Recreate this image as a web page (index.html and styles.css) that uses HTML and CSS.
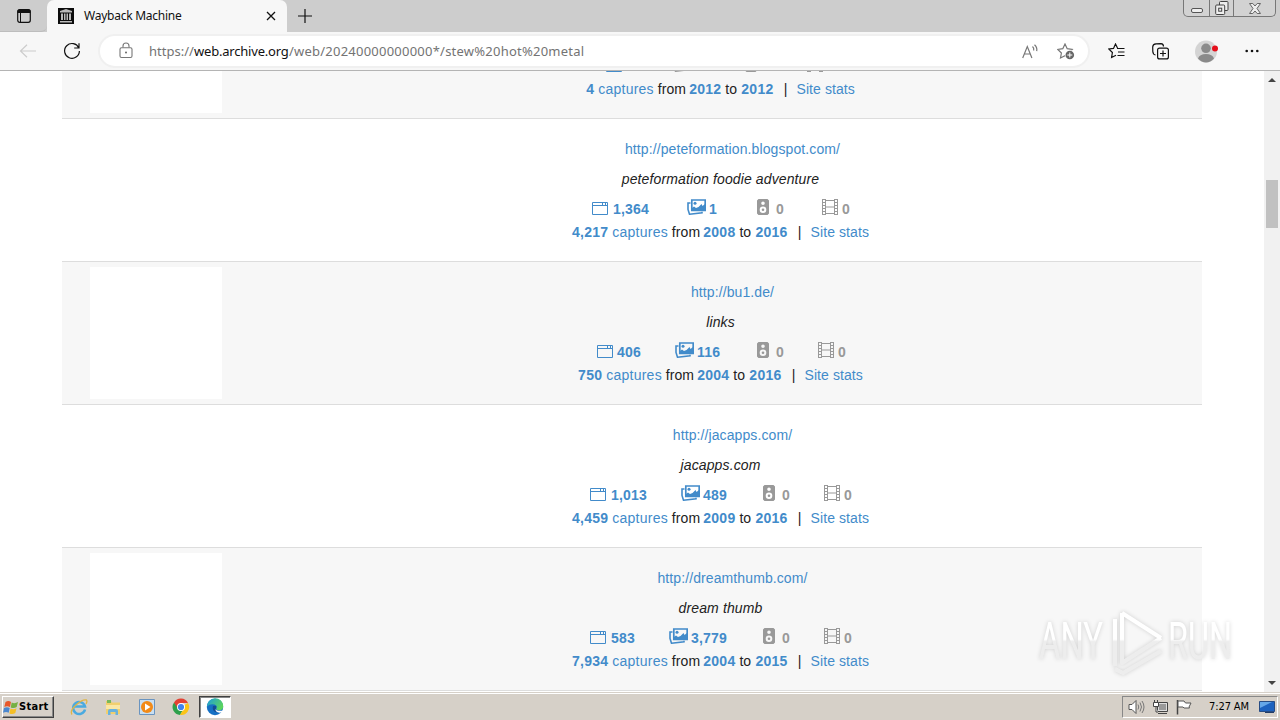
FILE: index.html
```html
<!DOCTYPE html>
<html lang="en">
<head>
<meta charset="utf-8">
<title>Wayback Machine</title>
<link rel="stylesheet" href="styles.css">
</head>
<body>
<svg class="defs" aria-hidden="true">
  <symbol id="web" viewBox="0 0 16 13"><path d="M.5.5h15v12H.5zM0 3.5h16M10.500 1v2M13.500 1v2" fill="none" stroke="currentColor"/></symbol>
  <symbol id="img" viewBox="0 0 19 16"><path d="M3.500 4H1v6.500l1.500 4.700 12.500-1.500v-1" fill="none" stroke="currentColor" stroke-width="1.600"/><path d="M4.800 1h13.400v10.500H4.800z" fill="none" stroke="currentColor" stroke-width="1.700"/><path d="M5 9l2-1.500 2 1.500 2.500-1 3-3 1 2L18 5v6.500H5z" fill="currentColor"/><circle cx="8" cy="4.300" r="1.500" fill="currentColor"/></symbol>
  <symbol id="aud" viewBox="0 0 12 16"><path fill="currentColor" fill-rule="evenodd" d="M1.500 0h9L12 1.500v13L10.500 16h-9L0 14.500v-13zM6 2.500a1.800 1.800 0 1 0 0 3.600 1.800 1.800 0 0 0 0-3.600zM6 7.500a3.300 3.300 0 1 0 0 6.600 3.300 3.300 0 0 0 0-6.600z"/><circle cx="6" cy="10.800" r="1.300" fill="currentColor"/></symbol>
  <symbol id="film" viewBox="0 0 16 16"><path d="M.5 0v16M15.500 0v16M3.500 0v16M12.500 0v16M3 1.500h10M3 8h10M3 14.500h10M0 .5h4M0 3.500h4M0 6.500h4M0 9.500h4M0 12.500h4M0 15.500h4M12 .5h4M12 3.500h4M12 6.500h4M12 9.500h4M12 12.500h4M12 15.500h4" fill="none" stroke="currentColor"/></symbol>
</svg>

<header class="browser">
  <div class="tabstrip">
    <div class="tabmenu"><svg width="16" height="16" viewBox="0 0 16 16"><rect x="1.700" y="1.700" width="12.600" height="12.600" rx="2" fill="none" stroke="#111" stroke-width="1.200"/><path d="M1.500 5V3q0-1.500 1.500-1.500h10q1.500 0 1.500 1.500v2z" fill="#111"/><path d="M4.500 5v9" stroke="#111"/></svg></div>
    <div class="tab">
      <svg width="16" height="16" viewBox="0 0 16 16"><path fill="#0c0c0c" d="M0 0h16v16H0z"/><path fill="#bbb" d="M8 1l6 2v1.500H2V3zM2 13h12v1.500H2zM3 5.500h2V12H3zM6 5.500h1.500V12H6zM8.500 5.500H10V12H8.500zM11 5.500h2V12h-2z"/></svg>
      <span class="tabtitle">Wayback Machine</span>
      <svg width="10" height="10" viewBox="0 0 10 10"><path d="M1 1l8 8M9 1L1 9" stroke="#111" stroke-width="1.300"/></svg>
    </div>
    <svg class="plus" width="14" height="14" viewBox="0 0 14 14"><path d="M7 0v14M0 7h14" stroke="#111" stroke-width="1.200"/></svg>
    <div class="winbtns">
      <span class="wb1"><svg width="12" height="5" viewBox="0 0 12 5"><rect x=".5" y=".5" width="11" height="4" rx="1.500" fill="#eee" stroke="#555"/></svg></span>
      <span class="wb2"><svg width="14" height="14" viewBox="0 0 14 14"><g fill="#eee" stroke="#444"><rect x="4.500" y=".5" width="8.500" height="9" rx="1"/><rect x=".7" y="4" width="9" height="9.500" rx="1"/><rect x="3.700" y="7.200" width="3" height="3" /></g></svg></span>
      <span class="wb3"><svg width="12" height="11" viewBox="0 0 12 11"><path d="M.5.5h3.300L6 3 8.200.5h3.300L8 5.500l3.500 5H8.200L6 8l-2.200 2.500H.5L4 5.500z" fill="#eee" stroke="#666"/></svg></span>
    </div>
  </div>
  <div class="toolbar">
    <svg class="back" width="18" height="14" viewBox="0 0 18 14"><path d="M17 7H1.500M8 .8L1.500 7 8 13.200" fill="none" stroke="#ccc" stroke-width="1.200"/></svg>
    <svg class="reload" width="18" height="18" viewBox="0 0 18 18"><path d="M15.800 6A7.400 7.400 0 1 0 16.400 9M16 1.200V6h-4.800" fill="none" stroke="#111" stroke-width="1.200"/></svg>
    <div class="omnibox">
      <svg class="lock" width="14" height="17" viewBox="0 0 14 17"><rect x="1" y="5.700" width="12" height="9.800" rx="1.500" fill="none" stroke="#777" stroke-width="1.100"/><path d="M4 5.500V4q0-3 3-3t3 3v1.500" fill="none" stroke="#777" stroke-width="1.100"/><circle cx="7" cy="10.600" r="1" fill="#666"/></svg>
      <span class="url"><span class="u1">https://</span><b class="u2">web.archive.org</b><span class="u3">/web/20240000000000*/stew%20hot%20metal</span></span>
      <svg class="read" width="17" height="15" viewBox="0 0 17 15"><path d="M.7 14L5.300 2.500 9.900 14M2.300 10h6M10.500 2.500q1.700 1.500 1.200 4M12.500.7q3 2.800 2.200 6.500" fill="none" stroke="#777" stroke-width="1.200"/></svg>
      <svg class="fav" width="18" height="17" viewBox="0 0 18 17"><path d="M8 1l2.200 4.700 5 .7-3.700 3.600.9 5L8 12.700 3.500 15l.9-5L.8 6.400l5-.7z" fill="none" stroke="#777" stroke-width="1.200"/><circle cx="12.800" cy="12" r="5" fill="#fff"/><circle cx="12.800" cy="12" r="4.300" fill="#666"/><path d="M10.300 12h5M12.800 9.500v5" stroke="#fff"/></svg>
    </div>
    <svg class="favs" width="17" height="16" viewBox="0 0 17 16"><path d="M9.500 5L7.500 1 5.500 5.400.8 6l3.600 3.500-.8 5L8 12.300M9 5.500h7.500M10 9h6.500M9.500 12.500h7" fill="none" stroke="#111" stroke-width="1.200"/></svg>
    <svg class="coll" width="17" height="17" viewBox="0 0 17 17"><path d="M3.500 12Q1 11.500.8 8.500L.7 4Q.8 1 4 .8l5-.2q2.500.2 2.500 3" fill="none" stroke="#111" stroke-width="1.200"/><rect x="5.600" y="5.100" width="10.800" height="10.800" rx="2" fill="#f7f7f7" stroke="#111" stroke-width="1.200"/><path d="M11 7.500v6M8 10.500h6" stroke="#111" stroke-width="1.200"/></svg>
    <svg class="prof" width="24" height="23" viewBox="0 0 24 23"><circle cx="11" cy="11.500" r="11" fill="#d4d4d4"/><circle cx="11" cy="8.300" r="4.800" fill="#8a8a8a"/><path d="M3 18.500q1.500-4.500 8-4.500t8 4.500Q15.500 22.400 11 22.400T3 18.500z" fill="#8a8a8a"/><circle cx="20" cy="8.500" r="3" fill="#e5101c"/></svg>
    <svg class="dots" width="14" height="4" viewBox="0 0 14 4"><g fill="#111"><circle cx="1.700" cy="2" r="1.300"/><circle cx="7" cy="2" r="1.300"/><circle cx="12.300" cy="2" r="1.300"/></g></svg>
  </div>
</header>

<div class="viewport">
  <main class="results">
    <article class="row odd first">
      <div class="thumb"></div>
      <div class="info">
        <a class="link">&nbsp;</a>
        <em class="title">&nbsp;</em>
        <div class="stats s0"><span class="st web on"><svg><use href="#web"/></svg></span><span class="st img"><svg><use href="#img"/></svg></span><span class="st aud"><svg><use href="#aud"/></svg></span><span class="st film"><svg><use href="#film"/></svg></span></div>
        <div class="caps"><b>4</b><a class="c">captures</a><span class="f">from</span><b>2012</b><span class="t">to</span><b>2012</b><span class="bar">|</span><a class="ss">Site stats</a></div>
      </div>
    </article>
    <article class="row">
      <div class="thumb"></div>
      <div class="info">
        <a class="link">http://peteformation.blogspot.com/</a>
        <em class="title">peteformation foodie adventure</em>
        <div class="stats s1"><span class="st web on"><svg><use href="#web"/></svg><b>1,364</b></span><span class="st img on"><svg><use href="#img"/></svg><b>1</b></span><span class="st aud"><svg><use href="#aud"/></svg><b>0</b></span><span class="st film"><svg><use href="#film"/></svg><b>0</b></span></div>
        <div class="caps"><b>4,217</b><a class="c">captures</a><span class="f">from</span><b>2008</b><span class="t">to</span><b>2016</b><span class="bar">|</span><a class="ss">Site stats</a></div>
      </div>
    </article>
    <article class="row odd">
      <div class="thumb"></div>
      <div class="info">
        <a class="link">http://bu1.de/</a>
        <em class="title">links</em>
        <div class="stats s2"><span class="st web on"><svg><use href="#web"/></svg><b>406</b></span><span class="st img on"><svg><use href="#img"/></svg><b>116</b></span><span class="st aud"><svg><use href="#aud"/></svg><b>0</b></span><span class="st film"><svg><use href="#film"/></svg><b>0</b></span></div>
        <div class="caps"><b>750</b><a class="c">captures</a><span class="f">from</span><b>2004</b><span class="t">to</span><b>2016</b><span class="bar">|</span><a class="ss">Site stats</a></div>
      </div>
    </article>
    <article class="row">
      <div class="thumb"></div>
      <div class="info">
        <a class="link">http://jacapps.com/</a>
        <em class="title">jacapps.com</em>
        <div class="stats s3"><span class="st web on"><svg><use href="#web"/></svg><b>1,013</b></span><span class="st img on"><svg><use href="#img"/></svg><b>489</b></span><span class="st aud"><svg><use href="#aud"/></svg><b>0</b></span><span class="st film"><svg><use href="#film"/></svg><b>0</b></span></div>
        <div class="caps"><b>4,459</b><a class="c">captures</a><span class="f">from</span><b>2009</b><span class="t">to</span><b>2016</b><span class="bar">|</span><a class="ss">Site stats</a></div>
      </div>
    </article>
    <article class="row odd">
      <div class="thumb"></div>
      <div class="info">
        <a class="link">http://dreamthumb.com/</a>
        <em class="title">dream thumb</em>
        <div class="stats s4"><span class="st web on"><svg><use href="#web"/></svg><b>583</b></span><span class="st img on"><svg><use href="#img"/></svg><b>3,779</b></span><span class="st aud"><svg><use href="#aud"/></svg><b>0</b></span><span class="st film"><svg><use href="#film"/></svg><b>0</b></span></div>
        <div class="caps"><b>7,934</b><a class="c">captures</a><span class="f">from</span><b>2004</b><span class="t">to</span><b>2015</b><span class="bar">|</span><a class="ss">Site stats</a></div>
      </div>
    </article>
  </main>
  <div class="scroll">
    <svg width="8" height="4" viewBox="0 0 8 4"><path d="M0 4l4-4 4 4z" fill="#444"/></svg>
    <div class="handle"></div>
    <svg width="8" height="4" viewBox="0 0 8 4"><path d="M0 0l4 4 4-4z" fill="#444"/></svg>
  </div>
</div>

<footer class="taskbar">
  <div class="start"><svg width="16" height="15" viewBox="0 0 16 15"><path d="M2.500 2q3-2 5.500 0L7 7Q4 5.500 1.300 7z" fill="#e8582a"/><path d="M8.700 2.500q3 1.500 6.300-.5L13.700 7q-3 2-6 .4z" fill="#76b043"/><path d="M1 8q3-1.500 5.700 0l-1 4.700Q3 11.300 0 12.800z" fill="#4a87cf"/><path d="M7.500 8.500q3 1.500 6-.2l-1.200 4.800q-3 1.800-5.900.3z" fill="#f5bf26"/></svg><b>Start</b></div>
  <div class="apps">
    <svg width="18" height="18" viewBox="0 0 18 18"><path d="M15 11.500A6 6 0 1 1 15 8.600H4.500" fill="none" stroke="#4aaae0" stroke-width="2.500"/><path d="M2 16.500Q-.5 13 6 7T16.500 2q1 1.500-.5 4" fill="none" stroke="#e0b545" stroke-width="1.300"/></svg>
    <svg width="18" height="18" viewBox="0 0 18 18"><path d="M2 3h5l1 1.500h8V16H2z" fill="#f1cf6e"/><path d="M3 2h4v3H3z" fill="#78b85a"/><path d="M2 7h14v4H2z" fill="#fae7a5"/><path d="M4 17v-4q0-2 2-2h6q2 0 2 2v4h-2.500v-3h-5v3z" fill="#69b2dd"/></svg>
    <svg width="18" height="18" viewBox="0 0 18 18"><path d="M1.500 1.500h15v15h-15z" fill="#c9dff2" stroke="#6a94c0"/><circle cx="9" cy="9" r="6" fill="#f28a18"/><path d="M7 5.500v7L12.500 9z" fill="#fff"/></svg>
    <svg width="18" height="18" viewBox="0 0 18 18"><path d="M9 9L2 4.500A8 8 0 0 0 8 17l3.500-6z" fill="#2da04b"/><path d="M9 9l7-4a8 8 0 0 1-8 12l3.500-6z" fill="#fbc417"/><path d="M9 5h7a8 8 0 0 0-14-.5L5.500 10z" fill="#e34133"/><circle cx="9" cy="9" r="4" fill="#fff"/><circle cx="9" cy="9" r="3.100" fill="#4083ee"/></svg>
    <div class="active"><svg width="18" height="18" viewBox="0 0 18 18"><defs><linearGradient id="eg" x1="0" y1="0" x2="1" y2=".5"><stop offset="0" stop-color="#1a9be0"/><stop offset="1" stop-color="#5bd45e"/></linearGradient></defs><circle cx="9" cy="9" r="8.200" fill="#1670c4"/><path d="M1 8.500A8 8 0 0 1 17.200 8q.3 4-4 4.300-3.500 0-2.700-2 1-2.800-2-3.800Q4 5.500 1 8.500z" fill="url(#eg)"/><path d="M7 8q-1.500 5 3.500 6.300 3 .5 5.500-1-2.500 1-4.500-.3Q9 12 10.200 9.500T7 8z" fill="#124c94"/><path d="M10.300 9.500q-1.300 2.800 2 3.300H18l-1.500 1.400q-6 1.500-7-2z" fill="#fff"/></svg></div>
  </div>
  <div class="tray">
    <svg width="17" height="16" viewBox="0 0 17 16"><path d="M1 5.500h3l4-4v13l-4-4H1z" fill="#fff" stroke="#555"/><path d="M10 5.500q1.500 2.500 0 5M12 3.500q3 4.500 0 9M14 2q4 6 0 12" fill="none" stroke="#777"/></svg>
    <svg width="17" height="16" viewBox="0 0 17 16"><path d="M5.500 3.500h10v9h-10zM6 14.500h9" fill="#ddd" stroke="#444"/><path d="M7 5h7v6H7z" fill="#999"/><path d="M1.500 3.500h5v4h-5zM2.500 1v2M5.500 1v2M4 8v5h2" fill="#fff" stroke="#444"/></svg>
    <svg width="16" height="16" viewBox="0 0 16 16"><path d="M1.500 1v14.500" stroke="#444" stroke-width="1.500"/><path d="M2 2h6l1.500 2H15l-2 4 .5 1H8L7 8H2z" fill="#fff" stroke="#555"/></svg>
    <time>7:27 AM</time>
    <svg width="16" height="14" viewBox="0 0 16 14"><path d="M.5 1.500h15v10H.5z" fill="#1d62bf" stroke="#274c84"/><path d="M1 2h12L1 8z" fill="#65a7e8"/><path d="M6 12h9v1H6z" fill="#223c66"/></svg>
  </div>
</footer>

<svg class="mark" width="250" height="80" viewBox="0 0 250 80">
  <defs><linearGradient id="wm" x1="0" y1="0" x2="0" y2="80" gradientUnits="userSpaceOnUse"><stop offset=".44" stop-color="#fff"/><stop offset=".47" stop-color="#ededed"/></linearGradient></defs>
  <g fill="url(#wm)">
    <text x="9" y="55" textLength="64" lengthAdjust="spacingAndGlyphs">ANY</text>
    <text x="138" y="55" textLength="64" lengthAdjust="spacingAndGlyphs">RUN</text>
  </g>
  <path d="M92 9l39 25M92 9v50l39-25M85 62V15M85 65l8 4 38-22" fill="none" stroke="url(#wm)" stroke-width="4" stroke-linejoin="round"/>
</svg>
</body>
</html>
```
FILE: styles.css
```css
* { box-sizing: border-box; }
html, body { margin: 0; height: 100%; }
body { width: 1280px; height: 720px; overflow: hidden; display: flex; flex-direction: column; background: #fff; font: 14px/20px "Liberation Sans", Arial, sans-serif; color: #222; position: relative; }
svg { display: block; flex: none; }
.defs { position: absolute; width: 0; height: 0; }

.browser { flex: none; height: 71px; background: #f7f7f7; border-bottom: 1px solid #b4b4b4; font-family: "Noto Sans", "Open Sans", sans-serif; }
.tabstrip { height: 32px; background: #cdcdcd; display: flex; align-items: flex-start; }
.tabmenu { width: 47px; height: 32px; padding: 8px 0 0 16px; border-bottom: 1px solid #bdbdbd; border-radius: 0 0 6px 0; }
.tab { width: 240px; height: 32px; background: #f7f7f7; border-radius: 7px 7px 0 0; display: flex; align-items: center; padding: 0 11px; }
.tabtitle { flex: 1; margin-left: 10px; font-size: 12px; color: #111; letter-spacing: -.25px; }
.plus { margin: 9px 0 0 11px; }
.winbtns { margin: 0 4px 0 auto; width: 93px; height: 17px; display: flex; border: 1px solid #777; border-top: 0; border-radius: 0 0 5px 5px; background: #d2d2d2; }
.winbtns span { display: flex; justify-content: center; align-items: center; }
.wb1 { width: 25px; padding-top: 4px; }
.wb2 { width: 25px; border: solid #777; border-width: 0 1px; }
.wb3 { flex: 1; }

.toolbar { height: 38px; display: flex; align-items: center; padding-left: 19px; }
.reload { margin-left: 26px; }
.omnibox { width: 988px; height: 30px; margin-left: 19px; border-radius: 15px; background: #fff; box-shadow: 0 0 0 2px #f0f0f0; display: flex; align-items: center; padding: 0 13px 0 19px; }
.lock { margin-top: -2px; }
.url { margin-left: 16px; flex: 1; color: #737373; font-size: 13px; white-space: nowrap; display: flex; }
.url b { font-weight: 400; color: #111; }
.u1 { width: 45px; }
.u2 { width: 95px; letter-spacing: -.2px; }
.u3 { letter-spacing: .23px; }
.fav { margin-left: 18px; }
.favs { margin-left: 20px; }
.coll { margin-left: 27px; }
.prof { margin-left: 26px; }
.dots { margin-left: 26px; }

.viewport { height: 621px; flex: none; overflow: hidden; display: flex; }
.results { width: 1140px; margin-left: 62px; }
.row { height: 143px; border-bottom: 1px solid #ddd; display: flex; }
.first { margin-top: -95px; }
.odd { background: #f7f7f7; }
.thumb { width: 132px; height: 132px; margin: 5px 0 0 28px; background: #fff; flex: none; }
.info { width: 822px; margin-left: 26px; padding-top: 20px; margin-right: auto; position: relative; text-align: center; white-space: nowrap; }
.info a { color: #428bca; }
.link { display: block; margin-left: 147px; letter-spacing: .1px; }
.title { display: block; margin: 10px 0 10px 123px; letter-spacing: .12px; color: #222; }
.stats { display: grid; height: 20px; text-align: left; }
.s0 { margin-left: 358px; grid-template-columns: 67px 72px 62px 40px; }
.s1 { margin-left: 344px; grid-template-columns: 95px 70px 65px 40px; }
.s2 { margin-left: 349px; grid-template-columns: 78px 82px 61px 40px; }
.s3 { margin-left: 342px; grid-template-columns: 91px 82px 61px 40px; }
.s4 { margin-left: 342px; grid-template-columns: 79px 94px 61px 40px; }
.st { display: flex; align-items: flex-start; color: #999; }
.on { color: #428bca; }
.st b { letter-spacing: .2px; line-height: 21px; }
.web svg { width: 16px; height: 13px; margin: 3px 5px 0 0; }
.s2 .web svg { margin-right: 4px; }
.img svg { width: 19px; height: 16px; margin: 0 3px 0 0; }
.aud svg { width: 12px; height: 16px; margin: 0 7px 0 0; }
.film svg { width: 16px; height: 16px; margin: 0 4px 0 0; }
.caps { display: flex; justify-content: center; margin: 3px 0 0 123px; }
.caps b { color: #428bca; letter-spacing: .25px; margin-right: 4px; }
.c { width: 59px; text-align: left; letter-spacing: .25px; }
.f { width: 32px; text-align: left; letter-spacing: .1px; text-indent: .5px; }
.t { width: 16px; text-align: left; }
.bar { width: 16px; text-align: center; }
.ss { margin-left: 3px; letter-spacing: .08px; }

.scroll { width: 16px; margin-left: auto; background: #f1f1f1; display: flex; flex-direction: column; align-items: center; padding: 7px 0 7px; }
.handle { width: 12px; height: 48px; margin: 98px 0 auto; background: #c1c1c1; }

.taskbar { height: 28px; flex: none; background: #d6d0c8; border-top: 1px solid #d6d0c8; box-shadow: inset 0 1px #fff; display: flex; align-items: flex-start; padding-top: 3px; font: 11px/20px "DejaVu Sans Condensed", "DejaVu Sans", sans-serif; color: #000; }
.start { width: 52px; height: 22px; margin-left: 2px; border: 1px solid; border-color: #fff #404040 #404040 #fff; box-shadow: inset -1px -1px #888; display: flex; align-items: center; }
.start b { letter-spacing: .3px; }
.apps { display: flex; align-items: center; margin-left: 16px; height: 22px; gap: 16px; }
.active { width: 32px; height: 22px; margin-left: -7px; background: #fff; border: 1px solid; border-color: #404040 #fff #fff #404040; box-shadow: inset 1px 1px #888; display: flex; align-items: center; justify-content: center; }
.tray { width: 156px; height: 22px; margin: 0 2px 0 auto; border: 1px solid; border-color: #888 #fff #fff #888; display: flex; align-items: center; padding-left: 5px; gap: 7px; }
.tray time { width: 42px; margin-left: 10px; white-space: nowrap; letter-spacing: -.1px; }
.tray svg:last-child { margin-left: 1px; }

.mark { position: absolute; left: 1030px; top: 604px; overflow: visible; filter: drop-shadow(0 0 2px rgba(0,0,0,.16)); }
.mark text { font: 52px Roboto, sans-serif; }
```
